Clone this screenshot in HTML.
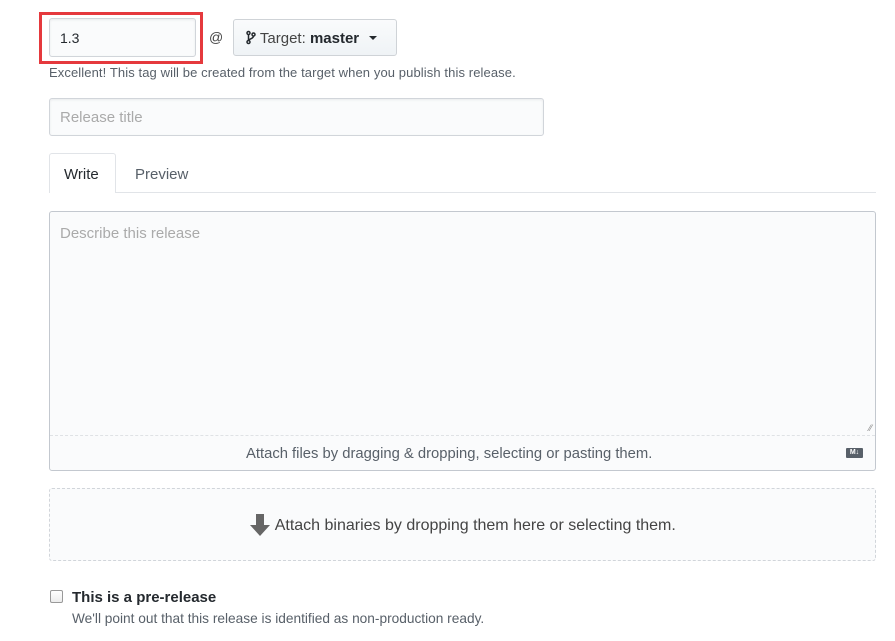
<!DOCTYPE html>
<html><head><meta charset="utf-8"><style>
*{box-sizing:border-box}
body{margin:0;width:895px;height:641px;background:#fff;font-family:"Liberation Sans",sans-serif;color:#24292e;position:relative;overflow:hidden}
.a{position:absolute;white-space:nowrap}
.inp{border:1px solid #d1d5da;border-radius:3px;background:#fafbfc;box-shadow:inset 0 1px 2px rgba(27,31,35,.075)}
</style></head><body>
<div class="a" style="left:39px;top:12px;width:164px;height:52px;border:3px solid #e5393d"></div>
<div class="a inp" style="left:49px;top:18px;width:147px;height:39px;font-size:14px;padding:11px 10px">1.3</div>
<div class="a" style="left:209px;top:29px;font-size:14px;color:#444">@</div>
<div class="a" style="left:233px;top:19px;width:164px;height:37px;border:1px solid #cfd3d7;border-radius:3px;background:linear-gradient(#fafbfc,#eff3f6);font-size:15px;padding:10px 0 0 12px">
<svg width="10" height="15" viewBox="0 0 10 14" style="vertical-align:-2px"><g fill="none" stroke="#24292e" stroke-width="1.5"><circle cx="2.5" cy="2.5" r="1.5"/><circle cx="2.5" cy="11.5" r="1.5"/><circle cx="7.5" cy="4" r="1.5"/><path d="M2.5 4v6M7.5 5.5c0 3-5 2.5-5 5"/></g></svg>
<span style="color:#444">Target:</span> <b>master</b>
<span style="display:inline-block;margin-left:6px;border:4px solid transparent;border-top:4px solid #24292e;vertical-align:-1px"></span></div>
<div class="a" style="left:49px;top:65px;font-size:13px;letter-spacing:0.1px;color:#586069">Excellent! This tag will be created from the target when you publish this release.</div>
<div class="a inp" style="left:49px;top:98px;width:495px;height:38px;font-size:15px;padding:10px 10px;color:#aaa">Release title</div>
<div class="a" style="left:115px;top:192px;width:761px;border-top:1px solid #e1e4e8"></div>
<div class="a" style="left:49px;top:153px;width:67px;height:40px;border:1px solid #e1e4e8;border-bottom:0;border-radius:3px 3px 0 0;background:#fff;font-size:15px;padding:12px 0 0 14px">Write</div>
<div class="a" style="left:135px;top:166px;font-size:15px;color:#586069">Preview</div>
<div class="a" style="left:49px;top:211px;width:827px;height:260px;border:1px solid #c3c8cf;border-radius:3px;background:#fafbfc">
<div class="a" style="left:10px;top:13px;font-size:15px;color:#aaa">Describe this release</div>
<div class="a" style="left:0;top:223px;width:825px;border-top:1px dashed #dfe2e5"></div>
<div class="a" style="left:196px;top:234px;font-size:14.8px;color:#586069">Attach files by dragging &amp; dropping, selecting or pasting them.</div>
<div class="a" style="right:12px;top:236px;width:17px;height:10px;background:#586069;border-radius:1px;color:#fff;font-size:7px;font-weight:bold;line-height:10px;text-align:center">M↓</div>
<div class="a" style="right:3px;top:211px;font-size:9px;color:#888">⁄⁄</div>
</div>
<div class="a" style="left:49px;top:488px;width:827px;height:73px;border:1px dashed #d1d5da;border-radius:3px;background:#fafbfc;text-align:center;font-size:16px;padding-top:25px;color:#444">
<svg width="22" height="22" viewBox="0 0 22 22" style="vertical-align:-6px"><path d="M7 0h8v11h6L11 22 1 11h6z" fill="#666"/></svg> Attach binaries by dropping them here or selecting them.</div>
<div class="a" style="left:50px;top:590px;width:13px;height:13px;border:1px solid #999;border-radius:2px;background:linear-gradient(#fff,#ececec)"></div>
<div class="a" style="left:72px;top:589px;font-size:15px;font-weight:bold">This is a pre-release</div>
<div class="a" style="left:72px;top:611px;font-size:13.7px;color:#586069">We'll point out that this release is identified as non-production ready.</div>
</body></html>
